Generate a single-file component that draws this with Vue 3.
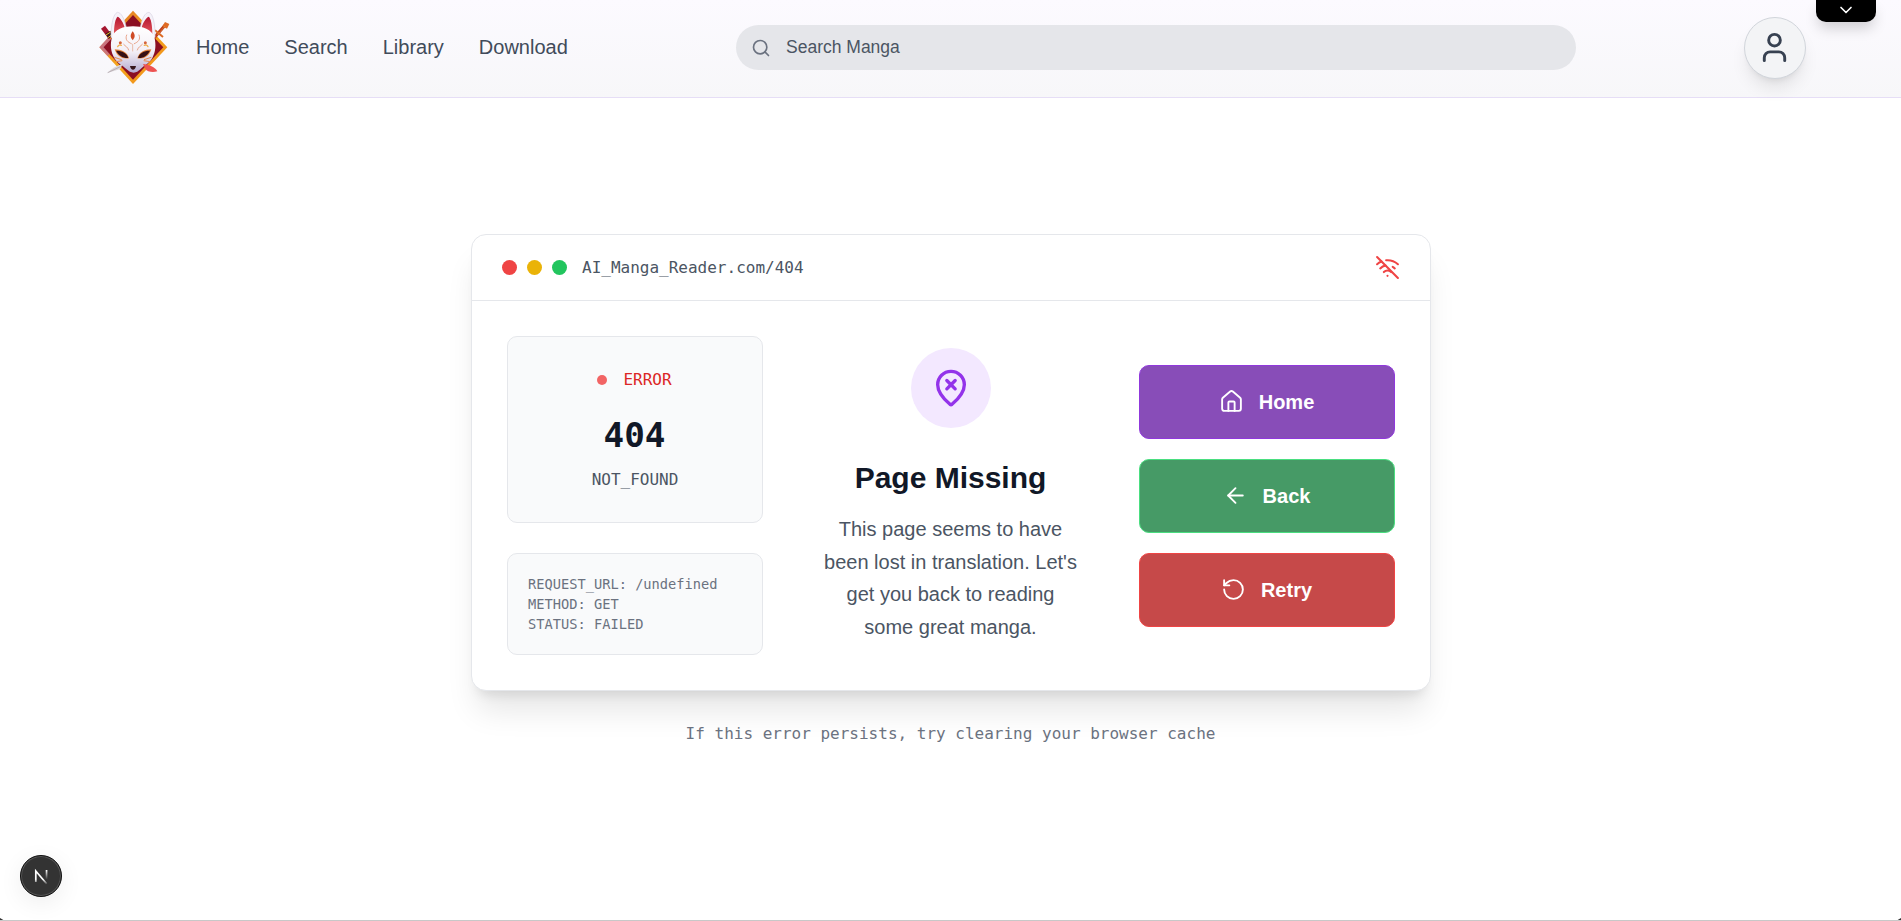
<script setup>
const links = ['Home', 'Search', 'Library', 'Download']
const request = ['REQUEST_URL: /undefined', 'METHOD: GET', 'STATUS: FAILED']
const actions = [
  {
    label: 'Home',
    tone: 'purple',
    paths: [
      'M15 21v-8a1 1 0 0 0-1-1h-4a1 1 0 0 0-1 1v8',
      'M3 10a2 2 0 0 1 .709-1.528l7-5.999a2 2 0 0 1 2.582 0l7 5.999A2 2 0 0 1 21 10v9a2 2 0 0 1-2 2H5a2 2 0 0 1-2-2z',
    ],
  },
  { label: 'Back', tone: 'green', paths: ['m12 19-7-7 7-7', 'M19 12H5'] },
  {
    label: 'Retry',
    tone: 'red',
    paths: ['M3 12a9 9 0 1 0 9-9 9.75 9.75 0 0 0-6.74 2.74L3 8', 'M3 3v5h5'],
  },
]
</script>

<template>
  <div class="page">
    <header class="topbar">
      <svg class="logo" viewBox="50 24 225 234">
        <defs>
          <linearGradient id="gold" x1="0" y1="0" x2="1" y2="1">
            <stop offset="0" stop-color="#d9662c" />
            <stop offset=".5" stop-color="#f5a61c" />
            <stop offset="1" stop-color="#ef8a1c" />
          </linearGradient>
          <linearGradient id="face" x1="0" y1="0" x2="0" y2="1">
            <stop offset="0" stop-color="#ffffff" />
            <stop offset=".55" stop-color="#f3eff6" />
            <stop offset="1" stop-color="#b5abd0" />
          </linearGradient>
          <linearGradient id="ear" x1="0" y1="0" x2="0" y2="1">
            <stop offset="0" stop-color="#b3142f" />
            <stop offset="1" stop-color="#e5575c" />
          </linearGradient>
        </defs>
        <path d="M158 32 261 142 158 252 57 142Z" fill="url(#gold)" />
        <path d="M158 45 249 142 158 239 69 142Z" fill="#8c0f22" />
        <path d="M57 142 82 114 92 118 70 142 88 162 82 168Z" fill="#b565b8" opacity=".6" />
        <path d="M62 86 74 77 97 108 85 117Z" fill="#a5152f" />
        <path d="m75 101 15-9 8 13-13 11Z" fill="#3a1a1c" />
        <path d="m77 105 14-9M83 113l13-10" stroke="#f2b52c" stroke-width="3" />
        <path d="m218 118 36-42" stroke="#bd3c1c" stroke-width="9" />
        <path d="m254 66 13 6-7 14-14-7Z" fill="#df6a24" />
        <path d="m224 91 24 20" stroke="#dc6922" stroke-width="6" />
        <path d="m232 104 22-26" stroke="#f3a43b" stroke-width="3" stroke-dasharray="4 4" />
        <path d="M92 112C92 72 99 42 111 37c12 0 22 20 27 47h42c4-27 14-47 26-47 12 5 19 35 18 75Z" fill="#f5f2f9" stroke="#d8d1e3" stroke-width="2" />
        <path d="M101 103C101 75 105 55 112 50c8 3 18 19 21 33-12 3-24 9-32 20Z" fill="url(#ear)" />
        <path d="M216 103C216 75 212 55 205 50c-8 3-18 19-21 33 12 3 24 9 32 20Z" fill="url(#ear)" />
        <path d="M95 112C102 88 130 79 158 79s57 9 64 33c6 22 4 44-6 62-8 16-25 22-36 34-6 6-12 10-20 10s-15-4-21-10c-12-12-29-19-37-34-11-18-13-41-7-62Z" fill="url(#face)" />
        <path d="M103 148c20 0 39 9 43 27-20 4-37-7-43-27Z" fill="#e8853c" />
        <path d="M213 148c-20 0-38 9-42 27 20 4 36-7 42-27Z" fill="#e8853c" />
        <path d="M107 152c19 0 34 8 37 22-17 1-30-8-37-22Z" fill="#351015" />
        <path d="M209 152c-19 0-33 8-36 22 17 1 29-8 36-22Z" fill="#351015" />
        <path d="M157 94c8 11 8 17 0 27-8-10-8-16 0-27Z" fill="#cf4b25" />
        <path d="M139 105c-6 14 3 21 14 26M176 105c6 14-3 21-14 26M130 133c6 7 12 7 15 17M186 133c-6 7-12 7-15 17" fill="none" stroke="#e59878" stroke-width="2.6" stroke-linecap="round" />
        <path d="M157 133v20" stroke="#e3ae98" stroke-width="2.5" stroke-linecap="round" />
        <path d="M112 140c2-5 7-6 11-4M203 140c-2-5-7-6-11-4" fill="none" stroke="#efb050" stroke-width="4" stroke-linecap="round" />
        <circle cx="120" cy="128" r="4.5" fill="#d5653c" />
        <circle cx="195" cy="128" r="4.5" fill="#d5653c" />
        <path d="m102 172 22 7M107 185l19-3M213 172l-22 7M209 185l-19-3" stroke="#e88a4e" stroke-width="3" />
        <path d="M149 198h18c-1 7-5 11-9 11s-8-4-9-11Z" fill="#35151c" />
        <path d="M127 191 120 207 81 219C92 206 110 197 127 191Z" fill="#d9d5d9" />
        <path d="m82 218 38-18" stroke="#a99da1" stroke-width="2" />
        <path d="M188 192c17 2 37 9 43 22-15 4-31 1-36-8Z" fill="#ed5352" />
      </svg>
      <nav class="nav">
        <a v-for="l in links" :key="l">{{ l }}</a>
      </nav>
      <div class="search">
        <svg class="icon search-icon" viewBox="0 0 24 24"><circle cx="11" cy="11" r="8" /><path d="m21 21-4.3-4.3" /></svg>
        <span>Search Manga</span>
      </div>
      <button class="user">
        <svg class="icon" viewBox="0 0 24 24"><path d="M19 21v-2a4 4 0 0 0-4-4H9a4 4 0 0 0-4 4v2" /><circle cx="12" cy="7" r="4" /></svg>
      </button>
      <button class="tab">
        <svg class="icon" viewBox="0 0 24 24"><path d="m6 9 6 6 6-6" /></svg>
      </button>
    </header>

    <main class="main">
      <section class="card">
        <div class="card-head">
          <div class="dots"><i class="d-red"></i><i class="d-yellow"></i><i class="d-green"></i></div>
          <span class="mono url">AI_Manga_Reader.com/404</span>
          <svg class="icon wifi" viewBox="0 0 24 24">
            <path d="M12 20h.01" /><path d="M8.5 16.429a5 5 0 0 1 7 0" /><path d="M5 12.859a10 10 0 0 1 5.17-2.69" />
            <path d="M19 12.859a10 10 0 0 0-2.007-1.523" /><path d="M2 8.82a15 15 0 0 1 4.177-2.643" />
            <path d="M22 8.82a15 15 0 0 0-11.288-3.764" /><path d="m2 2 20 20" />
          </svg>
        </div>
        <div class="card-body">
          <div class="left">
            <div class="panel status">
              <div class="mono error"><i></i><span>ERROR</span></div>
              <div class="mono code">404</div>
              <div class="mono reason">NOT_FOUND</div>
            </div>
            <div class="panel request">
              <div v-for="r in request" :key="r" class="mono">{{ r }}</div>
            </div>
          </div>
          <div class="center">
            <div class="pin">
              <svg class="icon" viewBox="0 0 24 24">
                <path d="M20 10c0 4.993-5.539 10.193-7.399 11.799a1 1 0 0 1-1.202 0C9.539 20.193 4 14.993 4 10a8 8 0 0 1 16 0" />
                <path d="m14.5 7.5-5 5" /><path d="m9.5 7.5 5 5" />
              </svg>
            </div>
            <h1>Page Missing</h1>
            <p>This page seems to have been lost in translation. Let's get you back to reading some great manga.</p>
          </div>
          <div class="actions">
            <button v-for="a in actions" :key="a.label" class="action" :class="a.tone">
              <svg class="icon" viewBox="0 0 24 24"><path v-for="p in a.paths" :key="p" :d="p" /></svg>
              <span>{{ a.label }}</span>
            </button>
          </div>
        </div>
      </section>
      <p class="mono hint">If this error persists, try clearing your browser cache</p>
    </main>

    <div class="dev-badge">
      <svg viewBox="0 0 40 40">
        <defs>
          <linearGradient id="fadeA" x1="0" y1="0" x2="0" y2="1">
            <stop offset=".65" stop-color="#fff" /><stop offset="1" stop-color="#fff" stop-opacity=".2" />
          </linearGradient>
          <linearGradient id="fadeB" x1="0" y1="0" x2="0" y2="1">
            <stop offset="0" stop-color="#fff" /><stop offset="1" stop-color="#fff" stop-opacity="0" />
          </linearGradient>
        </defs>
        <path d="M14.8 26V15L25.6 27.8" fill="none" stroke="url(#fadeA)" stroke-width="1.7" />
        <rect x="24.7" y="14" width="1.7" height="9.5" fill="url(#fadeB)" />
      </svg>
    </div>
    <i class="corner left-corner"></i>
    <i class="corner right-corner"></i>
  </div>
</template>

<style>
html,
body {
  margin: 0;
  background: #fff;
}
</style>

<style scoped>
.page {
  position: relative;
  box-sizing: border-box;
  height: 921px;
  overflow: hidden;
  background: #fff;
  border-bottom: 1px solid #c8c8c8;
  font-family: "Liberation Sans", Arial, sans-serif;
  font-size: 20px;
  color: #111827;
}
.icon {
  display: block;
  flex: none;
  fill: none;
  stroke: currentColor;
  stroke-width: 2;
  stroke-linecap: round;
  stroke-linejoin: round;
}
button {
  font: inherit;
  padding: 0;
  box-sizing: border-box;
}
.topbar {
  position: relative;
  box-sizing: border-box;
  height: 98px;
  display: flex;
  align-items: center;
  padding: 0 95px 2px 96.7px;
  background: linear-gradient(#fcfaff, #f7f7f9);
  border-bottom: 1px solid #e6def6;
}
.logo {
  width: 75px;
  height: 78px;
  flex: none;
  margin-bottom: 1px;
}
.nav {
  display: flex;
  gap: 35px;
  margin-left: 24.3px;
  color: #414b5a;
}
.search {
  box-sizing: border-box;
  width: 840px;
  height: 45px;
  border-radius: 23px;
  margin-left: auto;
  margin-right: 168px;
  padding-left: 15px;
  display: flex;
  align-items: center;
  gap: 15px;
  background: #e5e6ea;
  color: #4b5563;
  font-size: 17.5px;
}
.search-icon {
  width: 20px;
  height: 20px;
  color: #6b7280;
}
.user {
  width: 62px;
  height: 62px;
  flex: none;
  display: flex;
  align-items: center;
  justify-content: center;
  padding-right: 1px;
  border: 1px solid #d1d5db;
  border-radius: 50%;
  background: #f3f4f6;
  color: #374151;
  box-shadow: 0 12px 18px -4px rgba(0, 0, 0, 0.1), 0 5px 7px -5px rgba(0, 0, 0, 0.1);
}
.user .icon {
  width: 35px;
  height: 35px;
}
.tab {
  position: absolute;
  top: 0;
  right: 25px;
  width: 60px;
  height: 22px;
  display: flex;
  align-items: center;
  justify-content: center;
  padding-bottom: 3px;
  border: 0;
  border-radius: 0 0 10px 10px;
  background: #000;
  color: #fff;
  box-shadow: 0 8px 14px -2px rgba(0, 0, 0, 0.18);
}
.tab .icon {
  width: 20px;
  height: 20px;
}
.main {
  display: flex;
  flex-direction: column;
  align-items: center;
  padding-top: 136px;
}
.card {
  box-sizing: border-box;
  width: 960px;
  border: 1px solid #e5e7eb;
  border-radius: 15px;
  background: #fff;
  box-shadow: 0 25px 31px -6px rgba(0, 0, 0, 0.1), 0 10px 12px -7px rgba(0, 0, 0, 0.1);
}
.card-head {
  display: flex;
  align-items: center;
  height: 65px;
  padding: 0 30px;
  border-bottom: 1px solid #e5e7eb;
}
.dots {
  display: flex;
  gap: 10px;
  margin-right: 15px;
}
.dots i {
  width: 15px;
  height: 15px;
  border-radius: 50%;
}
.d-red {
  background: #ef4444;
}
.d-yellow {
  background: #eab308;
}
.d-green {
  background: #22c55e;
}
.mono {
  font-family: "DejaVu Sans Mono", monospace;
  font-size: 16px;
  line-height: 25px;
  white-space: pre;
}
.url {
  padding-left: 0.5px;
  color: #4b5563;
}
.wifi {
  width: 25px;
  height: 25px;
  margin-left: auto;
  color: #ef4444;
}
.card-body {
  display: grid;
  grid-template-columns: repeat(3, 1fr);
  gap: 60px;
  padding: 35px;
}
.left {
  display: flex;
  flex-direction: column;
  gap: 30px;
}
.panel {
  border: 1px solid #e5e7eb;
  border-radius: 10px;
  background: #f9fafb;
}
.status {
  padding: 30px;
  text-align: center;
}
.error {
  display: flex;
  align-items: center;
  justify-content: center;
  gap: 16px;
  margin-bottom: 21px;
  color: #dc2626;
}
.error i {
  width: 10px;
  height: 10px;
  border-radius: 50%;
  background: #f26464;
}
.code {
  margin-bottom: 9px;
  font-size: 34.3px;
  font-weight: 700;
  line-height: 45px;
  color: #111827;
}
.reason {
  padding-left: 1px;
  color: #4b5563;
}
.request {
  padding: 20px 20px 20px 20.5px;
  color: #6b7280;
}
.request .mono {
  font-size: 13.7px;
  line-height: 20px;
}
.center {
  display: flex;
  flex-direction: column;
  align-items: center;
  justify-content: center;
  text-align: center;
}
.pin {
  width: 80px;
  height: 80px;
  display: flex;
  align-items: center;
  justify-content: center;
  margin-bottom: 30px;
  border-radius: 50%;
  background: #f3e8ff;
  color: #9333ea;
}
.pin .icon {
  width: 40px;
  height: 40px;
}
h1 {
  margin: 0 0 15px;
  font-size: 30px;
  line-height: 40px;
}
.center p {
  margin: 0;
  line-height: 32.5px;
  color: #4b5563;
}
.actions {
  display: flex;
  flex-direction: column;
  justify-content: center;
  gap: 20px;
}
.action {
  height: 74px;
  display: flex;
  align-items: center;
  justify-content: center;
  gap: 15px;
  border: 1px solid;
  border-radius: 10px;
  color: #fff;
  font-weight: 700;
}
.action .icon {
  width: 25px;
  height: 25px;
  stroke-width: 1.8;
}
.action span {
  padding-top: 1px;
}
.purple {
  background: #884db8;
  border-color: #9038dc;
}
.green {
  background: #469a66;
  border-color: #4ade80;
}
.red {
  background: #c64949;
  border-color: #ef4444;
}
.hint {
  margin: 30px 0 0;
  color: #6b7280;
}
.dev-badge {
  position: absolute;
  left: 20px;
  top: 855px;
  width: 42px;
  height: 42px;
  box-sizing: border-box;
  border: 1px solid #111;
  border-radius: 50%;
  background: #333;
  box-shadow: inset 0 0 0 1px #555, 0 6px 24px rgba(0, 0, 0, 0.07);
}
.dev-badge svg {
  display: block;
  width: 40px;
  height: 40px;
}
.corner {
  position: absolute;
  bottom: -1px;
  width: 5px;
  height: 3px;
  background: #333;
}
.left-corner {
  left: 0;
  clip-path: polygon(0 0, 100% 100%, 0 100%);
}
.right-corner {
  right: 0;
  clip-path: polygon(100% 0, 100% 100%, 0 100%);
}
</style>
